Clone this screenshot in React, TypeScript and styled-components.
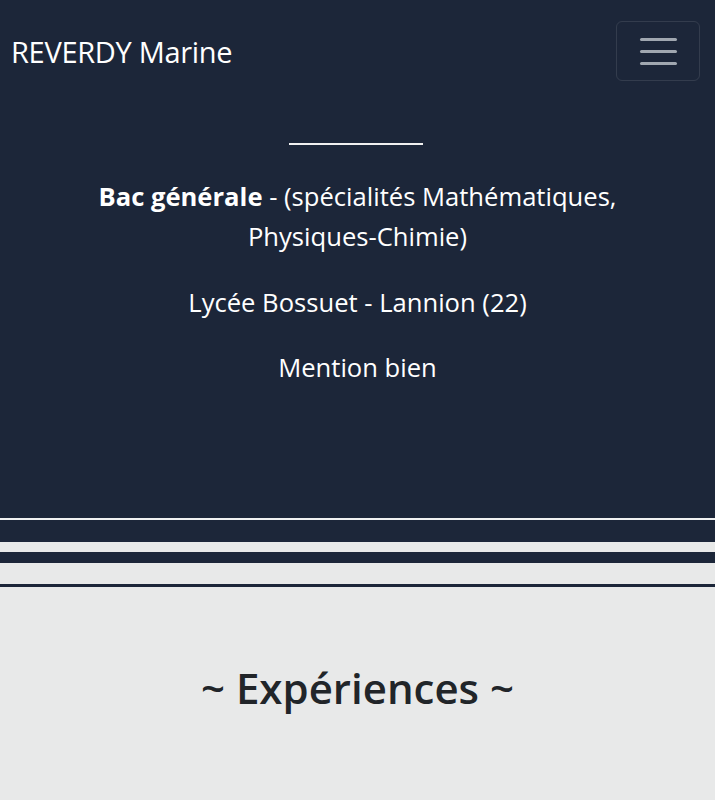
import styled, { createGlobalStyle } from 'styled-components'

const navy = '#1c2639'
const paper = '#e8e9e9'

const GlobalStyle = createGlobalStyle`
  body {
    margin: 0;
    background: ${paper};
    font-family: 'Open Sans', 'Noto Sans', sans-serif;
    color: #212529;
  }
  * { box-sizing: border-box; }
`

const Navbar = styled.nav`
  background: ${navy};
  height: 100px;
  padding: 21px 15px 0 11px;
  display: flex;
  justify-content: space-between;
  align-items: flex-start;
`

const Brand = styled.a`
  color: #fff;
  font-size: 29px;
  line-height: 1;
  margin-top: 16px;
  text-decoration: none;
  letter-spacing: -0.3px;
`

const Toggler = styled.button`
  width: 84px;
  height: 60px;
  background: transparent;
  border: 1px solid rgba(255, 255, 255, 0.1);
  border-radius: 6px;
  display: flex;
  flex-direction: column;
  align-items: center;
  justify-content: center;
  gap: 9px;
  padding: 0;
`

const TogglerBar = styled.span`
  display: block;
  width: 37px;
  height: 3px;
  border-radius: 2px;
  background: #a0a7b0;
`

const Education = styled.section`
  background: ${navy};
  color: #fff;
  height: 418px;
  padding-top: 43px;
  display: flex;
  flex-direction: column;
  align-items: center;
  text-align: center;
`

const Rule = styled.hr`
  width: 134px;
  border: 0;
  border-top: 2px solid #f0f0f0;
  margin: 0 3px 32px 0;
`

const Para = styled.p`
  font-size: 25.6px;
  line-height: 40px;
  margin: 0 0 25px;
  padding: 0 70px;

  &:first-of-type {
    margin-bottom: 25px;
    padding-bottom: 1px;
  }
`

const Stripes = styled.div`
  display: flex;
  flex-direction: column;
`

const Band = styled.div<{ $color: string; $h: number }>`
  background: ${p => p.$color};
  height: ${p => p.$h}px;
`

const Experiences = styled.section`
  background: ${paper};
  padding-top: 76px;
  height: 214px;
  text-align: center;
`

const SectionTitle = styled.h2`
  margin: 0;
  font-size: 42px;
  font-weight: 600;
  line-height: 1.2;
  color: #212529;
`

const bands: [string, number][] = [
  ['#f0f1f2', 2],
  [navy, 22],
  [paper, 10],
  [navy, 11],
  [paper, 21],
  [navy, 3],
]

export default function App() {
  return (
    <>
      <GlobalStyle />
      <Navbar>
        <Brand href="#">REVERDY Marine</Brand>
        <Toggler aria-label="menu">
          <TogglerBar />
          <TogglerBar />
          <TogglerBar />
        </Toggler>
      </Navbar>
      <Education>
        <Rule />
        <Para>
          <strong>Bac générale</strong> - (spécialités Mathématiques, Physiques-Chimie)
        </Para>
        <Para>Lycée Bossuet - Lannion (22)</Para>
        <Para>Mention bien</Para>
      </Education>
      <Stripes>
        {bands.map(([c, h], i) => (
          <Band key={i} $color={c} $h={h} />
        ))}
      </Stripes>
      <Experiences>
        <SectionTitle>~ Expériences ~</SectionTitle>
      </Experiences>
    </>
  )
}
